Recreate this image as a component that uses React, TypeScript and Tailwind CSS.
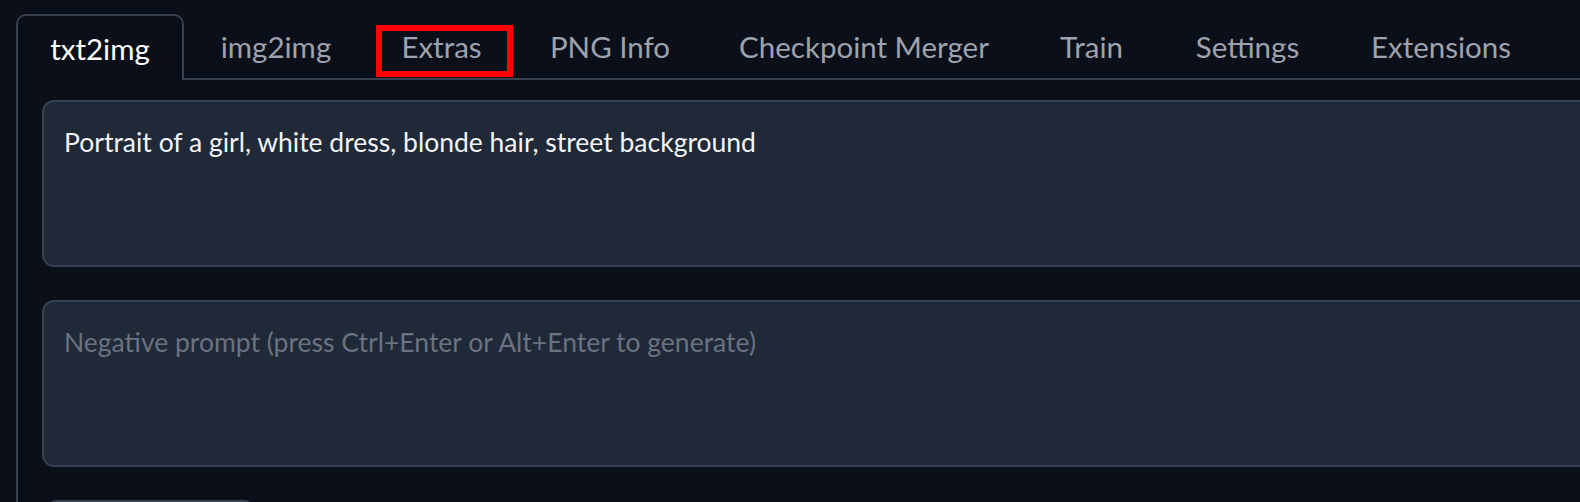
const tabs = [
  { label: "img2img", w: "w-[184px]" },
  { label: "Extras", w: "w-[147px]", marked: true },
  { label: "PNG Info", w: "w-[190px]" },
  { label: "Checkpoint Merger", w: "w-[318px]" },
  { label: "Train", w: "w-[137px]" },
  { label: "Settings", w: "w-[175px]" },
  { label: "Extensions", w: "w-[212px]" },
];

export default function App() {
  return (
    <div
      className="h-[502px] w-full overflow-hidden bg-[#0b0f19]"
      style={{ fontFamily: "Lato, 'Noto Sans', sans-serif" }}
    >
      {/* tab strip */}
      <div className="flex pl-[16px] pt-[14px]">
        <div className="flex h-[66px] w-[168px] items-center justify-center rounded-t-[10px] border-2 border-b-0 border-[#374151] pt-[2px] text-[29.5px] text-white">
          txt2img
        </div>
        {tabs.map((t) => (
          <div
            key={t.label}
            className={`relative flex h-[66px] ${t.w} items-center justify-center border-b-2 border-[#374151] pt-[2px] text-[29.5px] text-[#9ca3af]`}
          >
            {t.label}
            {t.marked && (
              <div className="absolute left-[8px] top-[11px] h-[52px] w-[137px] border-[6px] border-[#ff0000]" />
            )}
          </div>
        ))}
        <div className="flex-1 border-b-2 border-[#374151]" />
      </div>

      {/* panel */}
      <div className="ml-[16px] flex h-[500px] flex-col gap-[33px] border-l-2 border-[#374151] pl-[24px] pt-[20px]">
        <div className="h-[167px] w-[1600px] shrink-0 rounded-[12px] border-2 border-[#374151] bg-[#1f2937] px-[20px] pt-[22px] text-[26.5px] leading-[36px] text-[#f3f4f6]">
          Portrait of a girl, white dress, blonde hair, street background
        </div>
        <div className="h-[167px] w-[1600px] shrink-0 rounded-[12px] border-2 border-[#374151] bg-[#1f2937] px-[20px] pt-[22px] text-[26.5px] leading-[36px] text-[#6b7280]">
          Negative prompt (press Ctrl+Enter or Alt+Enter to generate)
        </div>
        <div className="ml-[6px] h-[40px] w-[205px] shrink-0 rounded-t-[8px] border-2 border-[#374151] bg-[#111827]" />
      </div>
    </div>
  );
}
